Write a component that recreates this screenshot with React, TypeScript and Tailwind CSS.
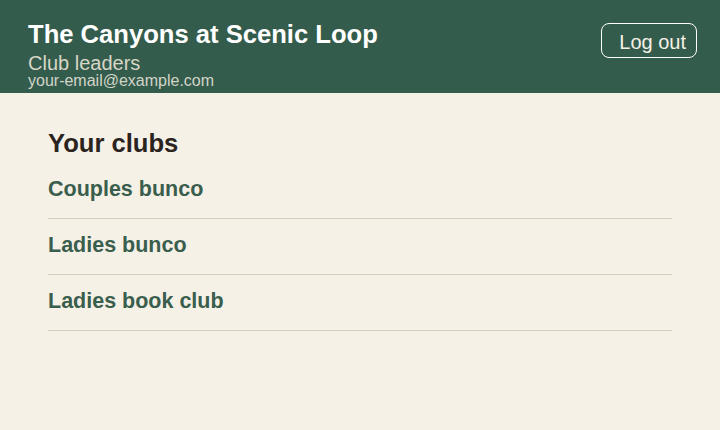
const clubs = ["Couples bunco", "Ladies bunco", "Ladies book club"];

export default function App() {
  return (
    <div
      className="min-h-[430px] bg-[#f6f1e7]"
      style={{ fontFamily: '"Liberation Sans", Arial, sans-serif' }}
    >
      {/* Header */}
      <header className="flex h-[93px] items-start justify-between bg-[#345c4c] pl-[28px] pr-[23px]">
        <div className="flex flex-col pt-[19px]">
          <h1 className="text-[25.6px] font-bold leading-[30px] text-white">
            The Canyons at Scenic Loop
          </h1>
          <p className="mt-[5px] text-[20px] leading-[19px] text-[#d8d6c6]">Club leaders</p>
          <p className="text-[16px] leading-[16px] text-[#d2d4c8]">your-email@example.com</p>
        </div>
        <button className="mt-[23px] h-[35px] rounded-[8px] border border-white pl-[17px] pr-[10px] pt-[3px] text-[20px] leading-[30px] text-[#f6f1e7]">
          Log out
        </button>
      </header>

      {/* Clubs */}
      <main className="px-[48px] pt-[35px]">
        <h2 className="mb-[5px] text-[25.6px] font-bold leading-[30px] text-[#2b241e]">Your clubs</h2>
        <ul>
          {clubs.map((club) => (
            <li key={club} className="border-b border-[#d8cfc3]">
              <a
                href="#"
                className="block pt-[14px] pb-[16px] text-[21.5px] font-bold leading-[25px] text-[#3a5e4d]"
              >
                {club}
              </a>
            </li>
          ))}
        </ul>
      </main>
    </div>
  );
}
